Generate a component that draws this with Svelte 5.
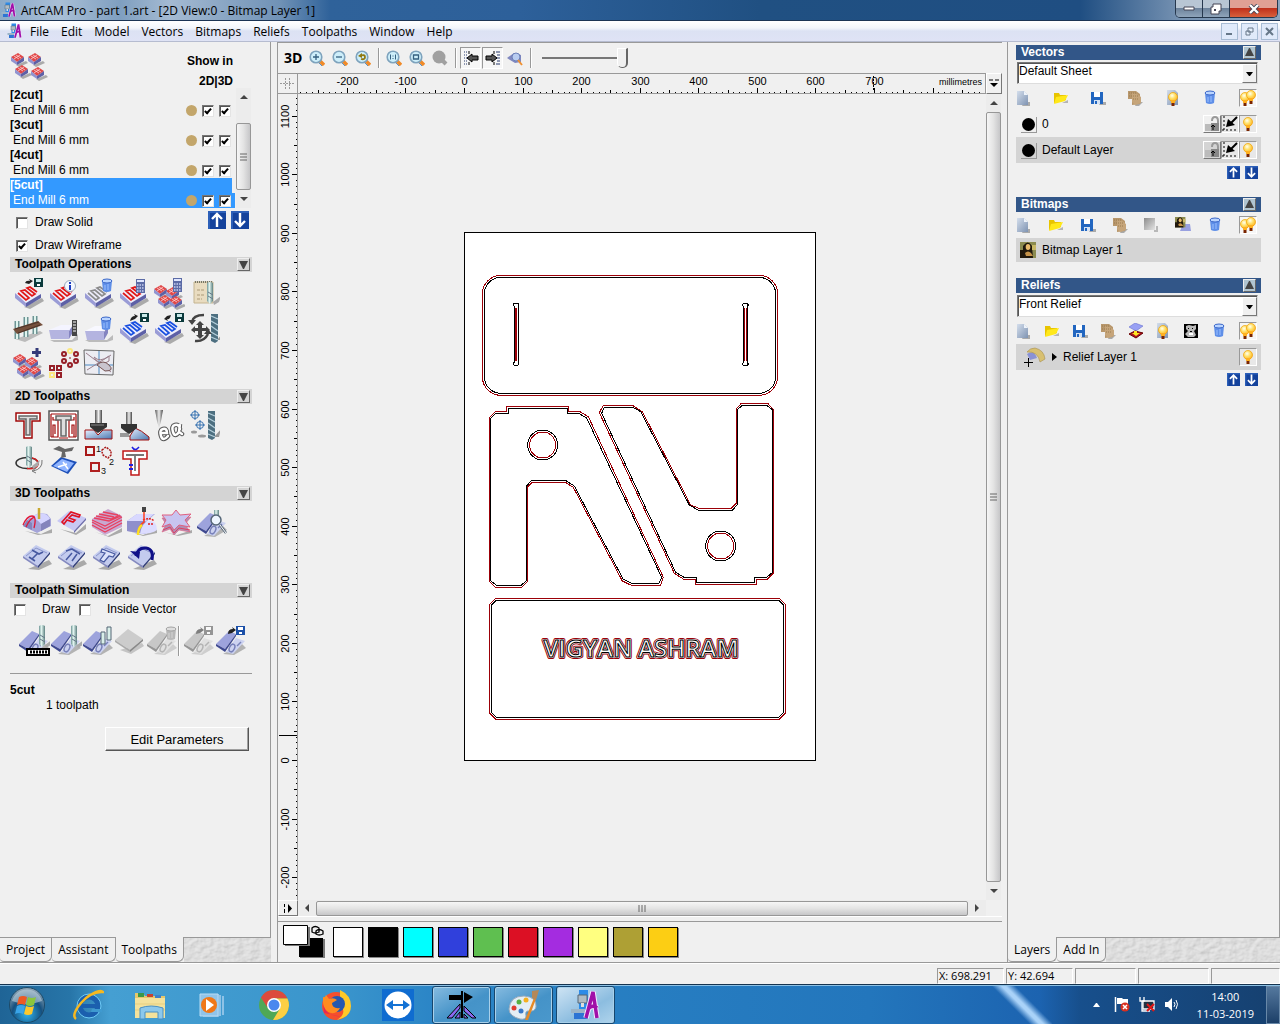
<script>
  const menus = ['File', 'Edit', 'Model', 'Vectors', 'Bitmaps', 'Reliefs', 'Toolpaths', 'Window', 'Help']

  let toolpaths = $state([
    { name: '2cut', tool: 'End Mill 6 mm', in2d: true, in3d: true },
    { name: '3cut', tool: 'End Mill 6 mm', in2d: true, in3d: true },
    { name: '4cut', tool: 'End Mill 6 mm', in2d: true, in3d: true },
    { name: '5cut', tool: 'End Mill 6 mm', in2d: true, in3d: true }
  ])
  let selected = $state('5cut')

  const sections = [
    {
      title: 'Toolpath Operations',
      icons: ['save-path', 'info-path', 'delete-path', 'calc-path', 'calc-all', 'notes', 'clamps', 'material', 'delete-material', 'export-path', 'import-path', 'transform', 'merge', 'array', 'panel']
    },
    {
      title: '2D Toolpaths',
      icons: ['profile', 'area', 'vcarve', 'bevel', 'engrave', 'drill', 'inlay', 'texture', 'order', 'bridges']
    },
    {
      title: '3D Toolpaths',
      indent: true,
      icons: ['machine', 'feature', 'zlevel', 'laser', 'cutout', 'inspect', 'plate-a', 'plate-b', 'plate-c', 'plate-undo']
    }
  ]

  const layerTools = {
    vectors: ['new', 'open', 'save', 'merge-l', 'bulb-page', 'bin', 'bulbs'],
    bitmaps: ['new', 'open', 'save', 'merge-l', 'fade', 'mona-relief', 'bin', 'bulbs'],
    reliefs: ['new', 'open', 'save', 'merge-l', 'stack', 'bulb-page', 'teddy', 'bin', 'bulbs']
  }

  const palette = [
    ['White', '#ffffff'], ['Black', '#000000'], ['Cyan', '#00ffff'], ['Blue', '#3040dc'], ['Green', '#5fbf50'],
    ['Red', '#dc1024'], ['Purple', '#a42ce0'], ['Yellow', '#ffff80'], ['Olive', '#aea034'], ['Amber', '#fcce14']
  ]

  const launchers = ['ie', 'explorer', 'player', 'chrome', 'firefox', 'teamviewer']
  const windows = ['vector-app', 'paint', 'artcam']

  // millimetres to pixels
  const scale = 0.5857
  const originX = 166
  const originY = 666

  function range(from, to, step) {
    const out = []
    for (let i = from; i <= to; i += step) out.push(i)
    return out
  }
  const tick = (mm) => (mm % 100 === 0 ? 6 : mm % 50 === 0 ? 4 : 2)
  const px = (mm) => Math.round(originX + mm * scale) + 0.5
  const py = (mm) => Math.round(originY - mm * scale) + 0.5
</script>

{#snippet icon(name, box = 32)}
  <svg class="icon" width={box} height={box} viewBox="0 0 {box} {box}" aria-hidden="true"><use href="#{name}" /></svg>
{/snippet}

{#snippet moveButtons(size)}
  <button class="plain" aria-label="Move up">
    <svg width={size} height={size} viewBox="0 0 18 18"><rect width="18" height="18" fill="#14429c" /><path d="M0 0h18v2H2v16H0Z" fill="#2c5fb8" /><path d="M9 16V3M4 8l5-5 5 5" fill="none" stroke="#fff" stroke-width="2.4" /></svg>
  </button>
  <button class="plain" aria-label="Move down">
    <svg width={size} height={size} viewBox="0 0 18 18"><rect width="18" height="18" fill="#14429c" /><path d="M0 0h18v2H2v16H0Z" fill="#2c5fb8" /><path d="M9 2v13M4 10l5 5 5-5" fill="none" stroke="#fff" stroke-width="2.4" /></svg>
  </button>
{/snippet}

{#snippet grain()}
  <svg class="grain" aria-hidden="true"><rect width="100%" height="100%" filter="url(#grain-filter)" /></svg>
{/snippet}

{#snippet sectionHead(title)}
  <header class="section-head">
    <h2>{title}</h2>
    <button class="fold" aria-label="Collapse {title}"><svg width="9" height="9" viewBox="0 0 9 9"><path d="M0 1h9L5 9H4Z" fill="#444" /></svg></button>
  </header>
{/snippet}

{#snippet layerHead(title)}
  <header class="layer-head">
    <h2>{title}</h2>
    <button class="fold light" aria-label="Collapse {title}"><svg width="9" height="9" viewBox="0 0 9 9"><path d="M0 8h9L5 0H4Z" fill="#444" /></svg></button>
  </header>
{/snippet}

{#snippet layerBar(names)}
  <div class="layer-tools">
    {#each names as name}
      <button class={['plain', name === 'bulbs' && 'sunken']} aria-label={name}>{@render icon(name, 16)}</button>
    {/each}
  </div>
{/snippet}

{#snippet sheet(id, label, value)}
  <div class="sheet">
    <select {id} aria-label={label}><option>{value}</option></select>
    <span class="drop"><svg width="7" height="4" viewBox="0 0 7 4"><path d="M0 0h7L4 4H3Z" /></svg></span>
  </div>
{/snippet}

<svg class="defs" width="0" height="0" aria-hidden="true">
  <defs>
    <filter id="grain-filter" x="0" y="0" width="100%" height="100%">
      <feTurbulence type="fractalNoise" baseFrequency="0.14 0.2" numOctaves="3" seed="4" />
      <feDiffuseLighting lighting-color="#e8e8e8" surfaceScale="1"><feDistantLight azimuth="225" elevation="64" /></feDiffuseLighting>
    </filter>
    <linearGradient id="g-steel"><stop offset="0" stop-color="#555" /><stop offset=".5" stop-color="#eee" /><stop offset="1" stop-color="#444" /></linearGradient>
    <linearGradient id="g-mill"><stop offset="0" stop-color="#6d9494" /><stop offset=".4" stop-color="#e3f6f1" /><stop offset="1" stop-color="#5d8080" /></linearGradient>
    <radialGradient id="g-bulb" cx=".4" cy=".35" r=".75"><stop offset="0" stop-color="#fffff0" /><stop offset=".45" stop-color="#ffe068" /><stop offset="1" stop-color="#ffa818" /></radialGradient>
    <linearGradient id="g-page" x1="0" y1="0" x2="1" y2="1"><stop offset="0" stop-color="#d4deec" /><stop offset="1" stop-color="#7e93b2" /></linearGradient>
    <linearGradient id="g-side" x1="0" y1="0" x2="1" y2="1"><stop offset="0" stop-color="#e8f0ff" /><stop offset="1" stop-color="#4a78b0" /></linearGradient>
    <linearGradient id="g-fade" x1="0" y1="0" x2="1" y2="1"><stop offset="0" stop-color="#8c8c8c" /><stop offset="1" stop-color="#e4e4e4" /></linearGradient>
    <radialGradient id="g-orb" cx=".5" cy=".75" r=".7"><stop offset="0" stop-color="#2fb4f0" /><stop offset=".6" stop-color="#15507f" /><stop offset="1" stop-color="#8aa2b4" /></radialGradient>

    <!-- shared parts -->
    <g id="p-body">
      <path d="M11 29 29 20l2 3-14 8Z" fill="#aaa" />
      <path d="M2 15 17 8l11 8-15 9Z" fill="#eeeefb" />
      <path d="M2 15v5l11 9v-4Z" fill="#9a9cd6" />
      <path d="M13 25v4l15-9v-4Z" fill="#5d60a6" />
    </g>
    <path id="p-zig" d="M5 15l8 7 3-2-8-7 4-1 7 6 3-2-8-6 3-1 7 5" fill="none" stroke="currentColor" stroke-width="1.7" />
    <g id="p-chip">
      <path d="M5 13 15 9l2 2-9 4Z" fill="#aaa" />
      <path d="M0 5 7 1l6 4-7 5Z" fill="#e04848" />
      <path d="M3 4l5 3M5 3l5 3M3 7l6-4" stroke="#ffd0d0" stroke-width=".8" />
      <path d="M0 5v4l6 4V10Z" fill="#9194d0" />
      <path d="M6 10v3l7-4V5Z" fill="#5d60a6" />
    </g>
    <g id="p-disk"><path d="M0 0h9v9H0Z" fill="#0b3a3c" /><path d="M2 1h5v3H2Z" fill="#c8e8e8" /><path d="M3 6h3v2H3Z" fill="#fff" /></g>
    <g id="p-bin"><path d="M0 2h10l-1 10q-4 2-8 0Z" fill="#5f8fe8" /><ellipse cx="5" cy="2" rx="5" ry="2" fill="#b9d4ff" stroke="#3a66c8" /><path d="M3 6v5M6 5v6" stroke="#9cc0ff" /></g>
    <g id="p-mill"><path d="M6 20l8-6-2 6-5 3Z" fill="#aaa" /><path d="M0 1q3-2 6 0v18l-3 3-3-3Z" fill="url(#g-mill)" /><path d="M1 10l5 3M1 14l5 3" stroke="#678" /></g>
    <g id="p-cutter"><path d="M6 26l7-8-2 8Z" fill="#999" /><path d="M0 0h7v27l-3 2-4-2Z" fill="#4d6f80" /><path d="M0 2l7 3M0 7l7 4M0 12l7 5M0 18l7 4M0 23l7 3" stroke="#b6d0dc" stroke-width="1.3" /></g>
    <g id="p-calc"><path d="M0 0h9v14H0Z" fill="#5b6ba6" /><path d="M1 2h7" stroke="#dfe6ff" stroke-width="2" /><path d="M1 6h7M1 9h7M1 12h7" stroke="#c8d0f0" stroke-width="1.5" stroke-dasharray="1.5 1" /></g>
    <g id="p-plate">
      <path d="M7 27 28 18l3 4-13 6Z" fill="#a9a9a9" />
      <path d="M2 14 15 3l14 7-12 14Z" fill="#c3cbee" />
      <path d="M2 14v2l15 10v-2Z" fill="#8389c0" />
      <path d="M17 24v2l12-14v-2Z" fill="#2c3a78" />
      <path d="M5 14 15 6l11 5" fill="none" stroke="#8c97cc" />
    </g>
    <g id="p-half">
      <path d="M8 29 27 19l4 4-12 7Z" fill="#b3b3b3" />
      <path d="M1 19 14 6l7 3-11 15Z" fill="#9da3dc" />
      <path d="M1 19v2l9 6v-3Z" fill="#3f4990" />
      <path d="M10 24 21 9v2L10 27Z" fill="#3f4990" />
      <path d="M11 27 21 13l9 3-12 13Z" fill="#ccd2f0" />
      <ellipse cx="17" cy="23" rx="2.5" ry="4" fill="none" stroke="#7982ba" stroke-width="1.5" transform="rotate(25 17 23)" />
      <path d="M22 21l4-4" stroke="#7982ba" stroke-width="1.5" />
    </g>
    <g id="p-bulb"><circle cx="5" cy="5" r="4.500" fill="url(#g-bulb)" stroke="#f0a000" stroke-width=".7" /><path d="M3 8h4v3H3Z" fill="#ffb020" /><path d="M3.500 11h3v3h-3Z" fill="#7a2500" /></g>
    <g id="p-lens">
      <path d="M11 11l4 4" stroke="#f08a28" stroke-width="3.500" />
      <path d="M9.500 12.500 13 16" stroke="#5a90c0" />
      <circle cx="7" cy="7" r="5.800" fill="#cdeefa" stroke="#7ea3bd" stroke-width="1.600" />
    </g>
    <g id="p-folder"><path d="M1 3h5l1 2h6v5L1 13Z" fill="#e8c400" /><path d="M3 7l12-2-3 6-11 3Z" fill="#ffe81a" /><path d="M9 13l6-3v3Z" fill="#b5b5b5" /></g>

    <!-- toolpath operations -->
    <g id="save-path"><use href="#p-body" /><use href="#p-zig" color="#e01818" /><path d="M12 5q1-3 5-2l-1-2 4 2-4 3" fill="#222" /><use href="#p-disk" x="21" y="0" /></g>
    <g id="info-path"><use href="#p-body" /><use href="#p-zig" color="#e01818" /><circle cx="22" cy="8" r="5.500" fill="#f4f8ff" stroke="#9ab" /><path d="M22 7v5M22 4v2" stroke="#1c3cc0" stroke-width="2" /></g>
    <g id="delete-path"><use href="#p-body" /><use href="#p-zig" color="#8c8c8c" /><use href="#p-bin" x="19" y="1" /></g>
    <g id="calc-path"><use href="#p-body" /><use href="#p-zig" color="#e01818" /><use href="#p-calc" x="18" y="1" /></g>
    <g id="calc-all"><use href="#p-chip" x="1" y="6" /><use href="#p-chip" x="13" y="8" /><use href="#p-chip" x="5" y="16" /><use href="#p-chip" x="16" y="17" /><use href="#p-calc" x="20" y="0" /></g>
    <g id="notes"><path d="M6 4h19v21H6Z" fill="#e9dcc0" stroke="#c4b490" /><path d="M7 4h17" stroke="#776" stroke-width="2" stroke-dasharray="1 1" /><path d="M9 12h8M9 17h7M9 21h5" stroke="#ab9a78" stroke-dasharray="3 1" /><use href="#p-mill" x="19" y="4" /></g>
    <g id="clamps"><path d="M2 26l10 3 18-9-3-2Z" fill="#bbb" /><path d="M4 8v18M13 4v20M22 3v18" stroke="#6d9494" stroke-width="5" /><path d="M4 8v18M13 4v20M22 3v18" stroke="#dff4ee" stroke-width="2" /><path d="M0 16 25 8l5 4L4 21Z" fill="#75503c" /><path d="M2 16 26 9M5 20l22-8" stroke="#4c3328" /></g>
    <g id="material"><path d="M2 27h22l6-6v6l-6 2H6Z" fill="#bbb" /><path d="M1 17 13 12h11l-3 6Z" fill="#f4f4ff" /><path d="M1 17h20v9H3Z" fill="#b4b4e0" /><path d="M21 18l4-6v7l-4 7Z" fill="#8484c0" /><path d="M24 7h5v16h-5Z" fill="#444" /><path d="M25 9h3M25 12h3M25 15h3M25 18h3" stroke="#fff" /></g>
    <g id="delete-material"><path d="M2 27h22l6-5v5l-6 2H6Z" fill="#bbb" /><path d="M2 18 12 13h12l-3 6Z" fill="#f8f8ff" /><path d="M2 18h19v9H4Z" fill="#b4b4e0" /><path d="M21 19l4-6v7l-4 7Z" fill="#8484c0" /><use href="#p-bin" x="18" y="4" /></g>
    <g id="export-path"><use href="#p-body" /><use href="#p-zig" color="#1a50e0" /><path d="M12 8q1-5 5-5l-1-2 4 2-3 3" fill="#222" /><use href="#p-disk" x="22" y="0" /></g>
    <g id="import-path"><use href="#p-body" /><use href="#p-zig" color="#1a50e0" /><path d="M18 2q-1 5-4 4l1 2-4-2 3-3" fill="#222" /><use href="#p-disk" x="22" y="0" /></g>
    <g id="transform"><use href="#p-cutter" x="23" y="1" /><path d="M16 2Q5 2 4 9M7 28q9 1 13-7" fill="none" stroke="#444" stroke-width="2.500" /><path d="M0 7h8l-4 5ZM16 21h8l-4-5Z" fill="#444" /><path d="M12 8l4 4h-2v3h4v-2l4 4-4 3v-2h-4v4h2l-4 4-4-4h2v-4H7v2l-4-3 4-4v2h3v-3H8Z" fill="#444" /></g>
    <g id="merge"><use href="#p-chip" x="0" y="5" /><use href="#p-chip" x="12" y="8" /><use href="#p-chip" x="4" y="16" /><use href="#p-chip" x="15" y="17" /><path d="M24 0v9M19 4.500h9" stroke="#343a78" stroke-width="3" /></g>
    <g id="array" fill="none" stroke="#962028" stroke-width="2"><path d="M2 18h4v4H2ZM9 18h4v4H9ZM9 25h4v4H9Z" /><path d="M2 25h4v4H2Z" stroke="#fbe880" /><circle cx="22" cy="3" r="2" stroke="#fbe880" /><circle cx="16" cy="6" r="2" /><circle cx="28" cy="6" r="2" /><circle cx="16" cy="13" r="2" /><circle cx="28" cy="13" r="2" /><circle cx="22" cy="17" r="2" /><path d="M21 10h2" stroke-width="1" /></g>
    <g id="panel"><path d="M1 2l30 1-1 24-28-1Z" fill="#ececf2" stroke="#666" /><path d="M2 17h28M16 3v23" stroke="#4a88c0" /><path d="M3 5l25 19M28 7 4 22M11 9q6 6 15-1v5q-7 5-13-1Z" fill="none" stroke="#9a7f8c" /><path d="M14 17q6-6 12 0t-4 6Z" fill="#c9c4ce" stroke="#755" /></g>

    <!-- 2d toolpaths -->
    <g id="profile" fill="none"><path d="M3 3h24v8h-8v17h-8V11H3Z" fill="#fff" stroke="#a00808" stroke-width="1.500" /><path d="M6 6h18v3h-7v16h-4V9H6Z" fill="#ddd" stroke="#666" stroke-width="1.500" /></g>
    <g id="area" fill="none"><path d="M1 1h29v29H1Z" fill="#fff" stroke="#555" stroke-width="1.500" /><path d="M3 4h25M3 27V4M28 4v23M5 7v3h5v17H5V15h2v9M26 7v3h-5v17h5V15h-2v9M3 27h4M28 27h-4M11 28h9" stroke="#a00808" stroke-width="1.200" /><path d="M8 6h15v4h-5v16h-5V10H8Z" fill="#ddd" stroke="#666" stroke-width="1.500" /></g>
    <g id="vcarve"><path d="M2 20h9l4 5 5-5h9v9H2Z" fill="url(#g-side)" stroke="#a01010" /><path d="M12 0h7v13h-7Z" fill="url(#g-steel)" /><path d="M7 13h17v4l-6 4-3 2-3-2-5-4Z" fill="#333" /><path d="M8 15h13" stroke="#888" /></g>
    <g id="bevel"><path d="M2 23h8l2 3 5-3v4H2Z" fill="#999" /><path d="M12 26l5-8q6 2 14 9v3H12Z" fill="url(#g-side)" stroke="#a01010" /><path d="M8 2h6v12H8Z" fill="url(#g-steel)" /><path d="M3 14h16v4l-5 4-3 2-3-2-5-4Z" fill="#333" /></g>
    <g id="engrave"><path d="M2 0h8l-2 11-2 7-2-7Z" fill="url(#g-steel)" /><g fill="none" stroke-linecap="round"><path d="M8 23h6q0-5-4-4t-2 7 7 0M27 19q-1-5-5-4t-2 7 6 0l1-8-1 8 3 2" stroke="#555" stroke-width="4.500" /><path d="M8 23h6q0-5-4-4t-2 7 7 0M27 19q-1-5-5-4t-2 7 6 0l1-8-1 8 3 2" stroke="#fff" stroke-width="2.500" /></g></g>
    <g id="drill"><g fill="none" stroke="#3570b0"><circle cx="7" cy="5" r="3.500" /><path d="M2 5h10M7 0v10" /><circle cx="12" cy="15" r="3.500" /><path d="M7 15h10M12 10v10" /></g><ellipse cx="6" cy="22" rx="3" ry="1.500" fill="#999" /><ellipse cx="14" cy="26" rx="4" ry="1.500" fill="#999" /><use href="#p-cutter" x="20" y="1" /></g>
    <g id="inlay" fill="none"><ellipse cx="14" cy="18" rx="11" ry="5.500" stroke="#333" stroke-width="1.500" /><path d="M14 12.500q11 0 11 6t-11 5" stroke="#d02020" stroke-width="1.500" /><path d="M29 15q1 9-9 11M23 23l-4 3 4 2" stroke="#777" /><use href="#p-mill" x="13" y="1" /></g>
    <g id="texture"><path d="M3 21 13 12l16 5-9 12Z" fill="#1c4fb8" /><path d="M5 21 14 14l12 4-7 9Z" fill="#8fb4ff" /><path d="M10 22l9-3M15 17l5 7" stroke="#fff" stroke-width="1.500" /><path d="M5 4l6-3 6 3 9-2-2 4-7 1 1 5-5 1 1-6Z" fill="#666" /></g>
    <g id="order" fill="none" stroke="#a81818" stroke-width="1.500"><path d="M3 2h8v8H3Z" stroke-width="2" /><path d="M8 18h8v8H8Z" stroke="#b02020" stroke-width="2" /><path d="M19 5l4-3 5 4v4l-3 3-5-3-1-3Z" stroke-dasharray="2 1" /><g fill="#111" stroke="none" font-family="Liberation Sans, sans-serif" font-size="9"><text x="13" y="7">1</text><text x="26" y="20">2</text><text x="18" y="29">3</text></g></g>
    <g id="bridges" fill="none"><path d="M5 6h24v8h-8v16h-8V14H5Z" fill="#fff" stroke="#c01818" stroke-width="1.500" /><path d="M8 10h18M17 10v16" stroke="#777" stroke-width="1.800" /><path d="M14 2q3 5 7 0" stroke="#2020e0" stroke-width="1.500" /><path d="M11 20h4M11 24h4" stroke="#2020e0" stroke-width="2" /></g>

    <!-- 3d toolpaths -->
    <g id="machine"><path d="M4 24l16 3 11-5v4l-14 2Z" fill="#aaa" /><path d="M2 19 8 11l10-5 8 1 4 5v7l-14 7Z" fill="#a4a4d8" /><path d="M8 11 18 6q9 0 11 6l-9 5q-4-6-12-6Z" fill="#d4d4ff" /><path d="M2 19l4-6 5 3v7ZM20 17l9-5v7l-9 5Z" fill="#8484bc" /><path d="M2 18q4-9 9-9t2 12M5 20q4-9 9-10" fill="none" stroke="#e01838" stroke-width="1.300" /><path d="M18 1v11" stroke="#c8a830" stroke-width="2.500" /></g>
    <g id="feature"><path d="M4 22l16 4 10-9v5L20 28Z" fill="#aaa" /><path d="M1 14 13 4l17 7-12 13Z" fill="#c8c8f4" /><path d="M18 24v2l12-13v-2Z" fill="#6c6cac" /><path d="M6 15 15 5l9 3-1 2-7-2-3 3 6 2-2 2-6-2-3 4Z" fill="none" stroke="#e01020" stroke-width="1.600" /></g>
    <g id="zlevel"><path d="M4 25l13 4 14-8v4L18 30Z" fill="#aaa" /><path d="M1 12 17 2l14 7v11L14 28 1 20Z" fill="#c8a8d0" /><path d="M3 11l15 3 12-5M5 9l15 3 9-4M8 7l15 3M12 5l15 3M1 15l13 7 17-9M1 18l13 7 17-9M1 13l13 6 17-9" fill="none" stroke="#e84060" stroke-width="1.300" /></g>
    <g id="laser"><path d="M3 24l14 4 14-6v4l-14 3Z" fill="#aaa" /><path d="M1 14 11 7h18l-9 8v12L1 24Z" fill="#a8a8dc" /><path d="M1 14h18v13L1 24Z" fill="#8f8fcc" /><path d="M1 14 11 7h17l-8 7Z" fill="#d8d8ff" /><path d="M14 27q2-13 11-13 6 1 6 9-5 4-17 4Z" fill="#dcdcff" /><path d="M17 13q7-3 11 1M22 17h6" stroke="#e02020" fill="none" stroke-dasharray="2 1" stroke-width="1.500" /><path d="M16 0h4v5h-4Z" fill="#444" /><path d="M18 5v10q-5 3-6 12" fill="none" stroke="#ff4020" stroke-width="1.500" /><path d="M16 18q-4 3-4 10" fill="none" stroke="#ffe020" stroke-width="2.500" /></g>
    <g id="cutout"><path d="M3 25l13 3 15-5v3l-14 3Z" fill="#aaa" /><path d="M1 8h10l4-5 4 5 11-1-6 7 5 8-11-2-5 5-4-6-8 3 4-8Z" fill="#b08cb4" stroke="#e06080" stroke-width=".6" transform="translate(0 3)" /><path d="M1 8h10l4-5 4 5 11-1-6 6 5 7-11-2-5 5-4-6-8 3 4-7Z" fill="#c8c4f0" stroke="#e06080" /><path d="M2 23l7-3 4 6 5-5 11 2" fill="none" stroke="#e04060" /></g>
    <g id="inspect"><use href="#p-half" /><path d="M18 3h5v12h-5Z" fill="url(#g-mill)" /><circle cx="20" cy="13" r="5" fill="#eef6ff" stroke="#567" stroke-width="1.500" /><path d="M24 18l6 8" stroke="#567" stroke-width="2.500" /><path d="M24 18l6 8" stroke="#fff" /></g>
    <g id="plate-a"><use href="#p-plate" /><path d="M11 8l7 4 4-2M17 11l-6 6M8 15l6 4" fill="none" stroke="#4658a0" stroke-width="1.600" /></g>
    <g id="plate-b"><use href="#p-plate" /><path d="M10 9l6-2 8 5M16 11l-6 7M16 19l5-7" fill="none" stroke="#4658a0" stroke-width="1.500" /></g>
    <g id="plate-c"><use href="#p-plate" /><path d="M11 7l13 5-2 3-4-1-5 6-4-2 5-7-4-1Z" fill="#dce2fa" stroke="#4658a0" stroke-width="1.200" /></g>
    <g id="plate-undo"><use href="#p-plate" /><path d="M10 14Q12 5 20 6t6 12" fill="none" stroke="#101088" stroke-width="3" /><path d="M4 9l9 8 1-7Z" fill="#101088" /></g>

    <!-- simulation -->
    <g id="sim-slow"><use href="#p-half" /><use href="#p-mill" x="21" y="0" /><path d="M9 24h22v6H9Z" fill="#fff" stroke="#000" stroke-width="2" /><path d="M12 27h17" stroke="#000" stroke-width="3" stroke-dasharray="2 1" /></g>
    <g id="sim-fast"><use href="#p-half" /><use href="#p-mill" x="21" y="0" /></g>
    <g id="sim-all"><use href="#p-half" /><path d="M19 7h4v12h-4ZM25 2h4v13h-4Z" fill="#d9efe9" stroke="#567" /></g>
    <g id="sim-reset"><path d="M6 25 28 18l2 3-13 8Z" fill="#c4c4c4" /><path d="M1 15 14 4l15 10-13 11Z" fill="#ccc" /><path d="M1 15v2l15 10v-2Z" fill="#aaa" /><path d="M16 25v2l13-11v-2Z" fill="#888" /></g>
    <g id="sim-save"><use href="#p-half" /><path d="M13 9q0-5 5-5l-1-2 4 3-4 3" fill="#222" /><path d="M21 1h9v9h-9Z" fill="#1c50a8" /><path d="M23 2h5v3h-5ZM24 7h3v2h-3Z" fill="#fff" /></g>
    <g id="sim-delete"><use href="#p-half" /><use href="#p-bin" x="20" y="2" /></g>

    <!-- layer tools, 16 px -->
    <g id="new"><path d="M8 12h6v4H6Z" fill="#aaa" /><path d="M1 1h7l4 4v10H1Z" fill="url(#g-page)" /><path d="M8 1v4h4Z" fill="#eef3fa" /></g>
    <g id="open"><use href="#p-folder" /></g>
    <g id="save"><path d="M11 12h5v3H9Z" fill="#aaa" /><path d="M1 2h12v12H1Z" fill="#2266c0" /><path d="M4 2h6v5H4Z" fill="#fff" /><path d="M4 10h6v4H4Z" fill="#d4e2f4" /><path d="M5 11h2v3H5Z" fill="#2266c0" /></g>
    <g id="merge-l"><path d="M10 12h6l-4 4H8Z" fill="#aaa" /><path d="M1 1h8l4 3v10l-8 1V9H1Z" fill="#b8976c" /><path d="M5 3l5 1 4 3v6l-6 2-3-3Z" fill="#c6a57a" /><path d="M2 3h7M2 6h9M6 9h6" stroke="#9a7c50" stroke-dasharray="1 1" /></g>
    <g id="bulb-page"><path d="M2 0h8l3 3v12H2Z" fill="url(#g-page)" /><use href="#p-bulb" x="3" y="2" /></g>
    <g id="bin"><use href="#p-bin" x="3" y="1" /></g>
    <g id="bulbs"><use href="#p-bulb" x="0" y="2" /><use href="#p-bulb" x="6" y="0" /></g>
    <g id="bulb"><use href="#p-bulb" x="3" y="1" /></g>
    <g id="fade"><path d="M1 1h11v12H1Z" fill="url(#g-fade)" /><path d="M13 9h2v6h-4v-2h2Z" fill="#b8b8b8" /></g>
    <g id="mona"><path d="M0 0h16v16H0Z" fill="#8b8b50" /><path d="M0 8h5v8H0ZM3 4q5-7 9 0l1 12H3Z" fill="#20180c" /><ellipse cx="8" cy="5" rx="2.300" ry="3" fill="#eabb6c" /><path d="M5 11q3-3 6 0l2 3H6Z" fill="#c59248" /><path d="M12 3h4v5h-4Z" fill="#c8b868" /></g>
    <g id="mona-relief"><path d="M8 7h7l1 7H5Z" fill="#98a0e0" /><use href="#mona" transform="scale(.65)" /></g>
    <g id="stack"><path d="M1 4 7 0l8 3-7 5Z" fill="#98a0f4" stroke="#6870d0" stroke-width=".6" /><path d="M1 11l6-3 8 2-7 5Z" fill="#b01020" stroke="#600" /><path d="M6 8h3v2h3l-4 3-4-3h2Z" fill="#ffe820" /></g>
    <g id="teddy"><path d="M1 1h14v14H1Z" /><path d="M3 3l3-1 4 1 3-1v4l-2 2 2 4-2 2H5l-3-3 3-3-2-2Z" fill="#bbb" /><path d="M5 5h1v1H5ZM9 5h1v1H9ZM7 8h2v1H7Z" /><path d="M6 10h4v2H6Z" fill="#fff" /></g>
    <g id="lock"><path d="M8 5q0-4 3-4t3 4v3" fill="none" stroke="#999" stroke-width="2" /><path d="M1 8h13v7H1Z" fill="#bbb" /><path d="M7 7h8v8H7Z" fill="#888" /><path d="M9 14V9M7 11l2-2 2 2" stroke="#000" fill="none" /></g>
    <g id="snap"><path d="M2 0v16M0 14h16" stroke="#000" stroke-dasharray="2 2" /><path d="M15 1 9 7" stroke="#000" stroke-width="2" /><path d="M6 3l7 6-9 2Z" /></g>

    <!-- view tools -->
    <g id="zoom-in"><use href="#p-lens" /><path d="M7 4v6M4 7h6" stroke="#356080" stroke-width="1.300" /></g>
    <g id="zoom-out"><use href="#p-lens" /><path d="M4 7h6" stroke="#356080" stroke-width="1.300" /></g>
    <g id="zoom-prev"><use href="#p-lens" /><path d="M6 9q4 1 4-2T5 6" fill="none" stroke="#907810" stroke-width="1.800" /><path d="M3 6l4-3v5Z" fill="#907810" /></g>
    <g id="zoom-one"><use href="#p-lens" /><path d="M4.500 4.500v5M9.500 4.500v5M7 5.500v1M7 8v1" stroke="#356080" /></g>
    <g id="zoom-fit"><use href="#p-lens" /><path d="M4.500 5h5v4h-5Z" fill="none" stroke="#356080" stroke-width="1.300" /></g>
    <g id="zoom-sel"><circle cx="7" cy="7" r="6.500" fill="#a0a0a0" /><path d="M10 10l4 4" stroke="#a0a0a0" stroke-width="4" /></g>
    <g id="dock-left"><path d="M1 2h4M1 5h3M1 8h4M1 11h3M1 14h4" stroke="#26386c" stroke-dasharray="1 1" /><path d="M6 1v3M6 12v3" stroke="#000" /><path d="M4 8l5-4v2h6v4H9v2Z" fill="#555" stroke="#000" /></g>
    <g id="dock-right"><path d="M11 2h4M12 5h3M11 8h4M12 11h3M11 14h4" stroke="#26386c" /><path d="M9 1v3M9 12v3" stroke="#000" /><path d="M12 8 7 4v2H1v4h6v2Z" fill="#555" stroke="#000" /></g>
    <g id="view-relief"><path d="M0 8 7 3l7 2v7l-6 1Z" fill="#8088c0" /><circle cx="9" cy="7" r="4" fill="#b8ccf0" stroke="#6c80b8" /><path d="M11 10l4 5" stroke="#f09030" stroke-width="2" /></g>

    <!-- desktop -->
    <g id="artcam"><path d="M9 1h9v20H9Z" fill="#2d8be8" /><path d="M8 6h9v8H8Z" fill="#b0bcc4" stroke="#567" /><path d="M11 14h3v4h-3Z" fill="#ddd" /><path d="M1 20h14v4H1Z" fill="#9bb4c8" /><path d="M4 24h14v6H4Z" fill="#2d74d4" /><path d="M16 29 23 3l4 26M18 20q5-5 9-1" fill="none" stroke="#f4e8ff" stroke-width="5.500" /><path d="M16 29 23 3l4 26M18 20q5-5 9-1" fill="none" stroke="#a010a8" stroke-width="3.500" /></g>
    <g id="ie"><circle cx="17" cy="17" r="9" fill="none" stroke="#1b5fae" stroke-width="5" /><circle cx="17" cy="17" r="12" fill="none" stroke="#6cc8f4" /><path d="M10 17h16" stroke="#1b5fae" stroke-width="4" /><path d="M20 20h10v3H19Z" fill="#3f9ad0" /><path d="M4 30Q-1 26 9 14T31 3q-2-3-11 2" fill="none" stroke="#f6b820" stroke-width="2.500" /></g>
    <g id="explorer"><path d="M1 4h8l2 3h20v22H1Z" fill="#e5c76c" /><path d="M4 4h6v4H4Z" fill="#3a9848" /><path d="M13 5h6v3h-6Z" fill="#c64232" /><path d="M21 6h6v3h-6Z" fill="#3f80c8" /><path d="M1 9h30v20H1Z" fill="#f4e29c" /><path d="M1 15h30M1 21h30" stroke="#e7cf80" /><path d="M6 19q11-4 23 0v11h-5v-7H11v7H6Z" fill="#8cc8ec" stroke="#4890c4" /></g>
    <g id="player"><path d="M7 5h16v23H7Z" fill="#82b8e0" /><path d="M24 6v21M27 7v19" stroke="#a8d0ee" fill="none" stroke-width="1.500" /><path d="M4 5h18v22H4Z" fill="#90c4ea" stroke="#b8dcf4" /><circle cx="13" cy="16" r="8" fill="#f07818" /><path d="M10 10v12l8-6Z" fill="#fff" /></g>
    <g id="chrome"><circle cx="16" cy="16" r="15" fill="#4fa856" /><path d="M3 8.500a15 15 0 0 1 26.500 1H16a7 7 0 0 0-6.500 9Z" fill="#dc4a3c" /><path d="M29.500 9.500A15 15 0 0 1 15 31l7-11.500q2-6-5-10Z" fill="#fccf44" /><circle cx="16" cy="16" r="7" fill="#fff" /><circle cx="16" cy="16" r="5.500" fill="#4a88ee" /></g>
    <g id="firefox"><circle cx="16" cy="17" r="14" fill="#f5502c" /><path d="M20 1q11 5 11 16T17 31Q28 24 20 15Z" fill="#ffc928" /><circle cx="17" cy="15" r="8" fill="#2458b0" /><path d="M3 8q2 1 3-2l3 4q5-2 8 1l-5 3q0 6 8 5-3 6-9 5T3 15Z" fill="#ff8c20" /><path d="M3 13q1 12 13 14T4 24Z" fill="#e42858" /></g>
    <g id="teamviewer"><path d="M0 0h32v32H0Z" fill="#0f6cd0" /><circle cx="16" cy="16" r="13.500" fill="#fff" /><path d="M4 16l7-5v4h10v-4l7 5-7 5v-4H11v4Z" fill="#1472d4" /></g>
    <g id="vector-app"><path d="M3 6h12v5H3ZM18 3l9 5-9 6Z" /><path d="M16 2v27" stroke="#000" stroke-width="2" /><path d="M1 29 14 15v4L6 29ZM9 29l5-6v6ZM18 17l12 12h-4l-8-7ZM18 25l4 4h-4Z" fill="#8c68f0" stroke="#000" /></g>
    <g id="paint"><path d="M1 20Q2 7 16 7q13 1 12 11-1 5-8 4-3 0-2 5 0 4-6 3Q1 27 1 20Z" fill="#e3eef4" stroke="#9ab" /><circle cx="6" cy="19" r="2.500" fill="#e03c30" /><circle cx="11" cy="13" r="2.500" fill="#58b040" /><circle cx="18" cy="11" r="2.500" fill="#f4b020" /><circle cx="13" cy="22" r="2.500" fill="#3878c8" /><path d="M17 31l9-22 2 1-8 21Z" fill="#e58a28" /><path d="M24 2l7-1-3 10-4-2Z" fill="#b48858" /></g>
  </defs>
</svg>

<div class="app">
  <header class="titlebar">
    {@render icon('artcam')}
    <h1>ArtCAM Pro - part 1.art - [2D View:0 - Bitmap Layer 1]</h1>
    <div class="caption">
      <button aria-label="Minimize"><svg width="12" height="6" viewBox="0 0 12 6"><path d="M1 1h10v3H1Z" fill="#fff" stroke="#445" /></svg></button>
      <button aria-label="Restore"><svg width="12" height="12" viewBox="0 0 12 12"><path d="M3 1h8v7H9v3H1V4h2Z" fill="#fff" stroke="#445" /><path d="M4 6h2v2H4Z" fill="#445" /></svg></button>
      <button class="close" aria-label="Close"><svg width="12" height="10" viewBox="0 0 12 10"><path d="M2 1l8 8M10 1 2 9" stroke="#445" stroke-width="4" /><path d="M2 1l8 8M10 1 2 9" stroke="#fff" stroke-width="2.400" /></svg></button>
    </div>
  </header>

  <nav class="menubar">
    {@render icon('artcam')}
    {#each menus as menu}
      <button class="plain">{menu}</button>
    {/each}
    <div class="mdi">
      <button aria-label="Minimize view"><svg width="9" height="9"><path d="M1 7h6" stroke="#678" stroke-width="2" /></svg></button>
      <button aria-label="Restore view"><svg width="9" height="9"><path d="M3 1h5v4H3ZM1 4h4v4H1Z" fill="#e4eefa" stroke="#678" /></svg></button>
      <button aria-label="Close view"><svg width="9" height="9"><path d="M1 1l7 7M8 1 1 8" stroke="#678" stroke-width="2" /></svg></button>
    </div>
  </nav>

  <main>
    <aside class="left">
      <div class="panel">
        <div class="list-head">
          <svg width="40" height="32" viewBox="0 0 40 32" aria-hidden="true"><use href="#p-chip" x="1" y="0" /><use href="#p-chip" x="18" y="0" /><use href="#p-chip" x="5" y="12" /><use href="#p-chip" x="21" y="14" /></svg>
          <p>Show in<br />2D|3D</p>
        </div>

        <div class="list">
          <div class="rows">
            {#each toolpaths as path}
              <div class={['path', path.name === selected && 'selected']}>
                <button class="plain name" onclick={() => (selected = path.name)}>[{path.name}]</button>
                <div class="tool">
                  <span>{path.tool}</span>
                  <i class="dot"></i>
                  <input type="checkbox" aria-label="Show {path.name} in 2D" bind:checked={path.in2d} />
                  <input type="checkbox" aria-label="Show {path.name} in 3D" bind:checked={path.in3d} />
                </div>
              </div>
            {/each}
          </div>
          <div class="vbar">
            <button class="plain" aria-label="Scroll up"><svg width="8" height="4"><path d="M0 4h8L4 0Z" fill="#444" /></svg></button>
            <div class="thumb"><svg width="7" height="8"><path d="M0 1h7M0 4h7M0 7h7" stroke="#666" /></svg></div>
            <button class="plain" aria-label="Scroll down"><svg width="8" height="4"><path d="M0 0h8L4 4Z" fill="#444" /></svg></button>
          </div>
        </div>

        <div class="options">
          <div>
            <label><input type="checkbox" />Draw Solid</label>
            <label><input type="checkbox" checked />Draw Wireframe</label>
          </div>
          <div class="move">{@render moveButtons(18)}</div>
        </div>

        {#each sections as section}
          {@render sectionHead(section.title)}
          <div class={['icons', section.indent && 'indent']}>
            {#each section.icons as name}
              <button class="plain" aria-label={name}>{@render icon(name)}</button>
            {/each}
          </div>
        {/each}

        {@render sectionHead('Toolpath Simulation')}
        <div class="sim-options">
          <label><input type="checkbox" />Draw</label>
          <label><input type="checkbox" />Inside Vector</label>
        </div>
        <div class="sim-icons">
          <button class="plain" aria-label="Simulate slowly">{@render icon('sim-slow')}</button>
          <button class="plain" aria-label="Simulate">{@render icon('sim-fast')}</button>
          <button class="plain" aria-label="Simulate all">{@render icon('sim-all')}</button>
          <button class="plain" aria-label="Reset simulation">{@render icon('sim-reset')}</button>
          <button class="plain off" aria-label="Delete simulation" disabled>{@render icon('sim-delete')}</button>
          <span class="rule"></span>
          <button class="plain off" aria-label="Load simulation" disabled>{@render icon('sim-save')}</button>
          <button class="plain" aria-label="Save simulation">{@render icon('sim-save')}</button>
        </div>
        <hr />
        <div class="summary">
          <b>{selected}</b>
          <span>1 toolpath</span>
        </div>
        <button class="edit">Edit Parameters</button>
      </div>
      <div class="tabs">
        <button>Project</button>
        <button>Assistant</button>
        <button class="active">Toolpaths</button>
        {@render grain()}
      </div>
    </aside>

    <section class="center">
      <div class="viewbar">
        <button class="plain three-d">3D</button>
        <button class="plain" aria-label="Zoom in">{@render icon('zoom-in', 16)}</button>
        <button class="plain" aria-label="Zoom out">{@render icon('zoom-out', 16)}</button>
        <button class="plain" aria-label="Zoom previous">{@render icon('zoom-prev', 16)}</button>
        <span class="rule"></span>
        <button class="plain" aria-label="Actual size">{@render icon('zoom-one', 16)}</button>
        <button class="plain" aria-label="Fit">{@render icon('zoom-fit', 16)}</button>
        <button class="plain" aria-label="Zoom to selection">{@render icon('zoom-sel', 16)}</button>
        <span class="rule"></span>
        <button class="plain sunken" aria-label="Toggle left panel">{@render icon('dock-left', 16)}</button>
        <button class="plain sunken" aria-label="Toggle right panel">{@render icon('dock-right', 16)}</button>
        <button class="plain" aria-label="Preview relief">{@render icon('view-relief', 16)}</button>
        <span class="rule"></span>
        <input type="range" min="0" max="100" value="100" aria-label="Contrast" />
      </div>

      <div class="view">
        <div class="corner"><svg width="15" height="11"><path d="M0 5.500h15M5.500 0v11M9.500 0v11" stroke="#999" stroke-dasharray="2 1" /></svg></div>
        <svg class="ruler top">
          {#each range(-280, 880, 10) as mm}
            <path d="M{px(mm)} 20v-{tick(mm)}" stroke="#000" />
          {/each}
          {#each range(-200, 700, 100) as mm}
            <text x={px(mm)} y="11" text-anchor="middle">{mm}</text>
          {/each}
          <path d="M575.500 2v14" stroke="#000" stroke-dasharray="2 1" />
          <text class="unit" x="100%" y="11" dx="-3" text-anchor="end">millimetres</text>
        </svg>
        <button class="raised" aria-label="Units"><svg width="10" height="9"><path d="M0 1h4M6 1h4" stroke="#000" /><path d="M1 4h8L5 8Z" /></svg></button>

        <svg class="ruler side">
          {#each range(-230, 1130, 10) as mm}
            <path d="M20 {py(mm)}h-{tick(mm)}" stroke="#000" />
          {/each}
          {#each range(-200, 1100, 100) as mm}
            <text transform="translate(11 {py(mm)}) rotate(-90)" text-anchor="middle">{mm}</text>
          {/each}
          <path d="M1 641.500h19" stroke="#000" />
        </svg>
        <svg class="canvas" role="img" aria-label="Part layout">
          <rect x="166.500" y="138.500" width="351" height="528" fill="#fff" stroke="#000" />
          <svg x="166" y="138" width="351" height="528" viewBox="-18 -474 1053 1584">
            <g class="cut">
              <rect x="37" y="-344" width="886" height="360" rx="56" />
              <path d="M58 83 76 65H110V49H295V65H330L355 80 580 562 572 586H484L457 573 310 292 286 277H187L172 292V575L155 592H77L58 575Z" />
              <path d="M388 68 400 46H487L517 65 662 345 687 355H784L798 340V57L814 40H893L910 58V550L893 567H860V582H675V567H640L613 550Z" />
              <path d="M59 643 77 625H928L946 643V970L928 988H77L59 970Z" />
              <circle cx="218" cy="165" r="39" />
              <circle cx="752" cy="468" r="39" />
            </g>
            <g class="outline">
              <rect x="43" y="-338" width="874" height="348" rx="50" />
              <path d="M62 85 78 70H116V55H292V70H326L350 84 575 562 567 580H484L459 567 313 288 286 271H184L170 288V572L153 586H79L62 572Z" />
              <path d="M395 70 403 51H487L512 65 658 345 686 361H787L801 345V60L817 46H890L908 60V547L890 562H854V577H679V562H642L617 547Z" />
              <path d="M65 645 79 631H926L941 645V968L926 982H79L65 968Z" />
              <circle cx="218" cy="165" r="45" />
              <circle cx="752" cy="468" r="45" />
              <path d="M132-251l-3-4 3-4h12l3 4-3 4V-82l3 4-3 4H132l-3-4 3-4ZM820-251l-3-4 3-4h12l3 4-3 4V-82l3 4-3 4H820l-3-4 3-4Z" />
            </g>
            <g class="cut"><path d="M136-247V-86M140-247V-86M824-247V-86M828-247V-86" /></g>
          </svg>
          <g class="sign">
            <use href="#sign" class="halo" />
            <use href="#sign" class="gap" />
            <text id="sign" x="343" y="563" text-anchor="middle">VIGYAN ASHRAM</text>
            <use href="#sign" class="line" />
          </g>
        </svg>
        <div class="vbar">
          <button class="plain" aria-label="Scroll up"><svg width="8" height="4"><path d="M0 4h8L4 0Z" fill="#444" /></svg></button>
          <div class="thumb"><svg width="7" height="8"><path d="M0 1h7M0 4h7M0 7h7" stroke="#666" /></svg></div>
          <button class="plain" aria-label="Scroll down"><svg width="8" height="4"><path d="M0 0h8L4 4Z" fill="#444" /></svg></button>
        </div>

        <button class="raised" aria-label="Next view"><svg width="10" height="9"><path d="M1.500 0v3M1.500 5v4" stroke="#000" /><path d="M5 0l4 4.500L5 9Z" /></svg></button>
        <div class="hbar">
          <button class="plain" aria-label="Scroll left"><svg width="4" height="8"><path d="M4 0v8L0 4Z" fill="#444" /></svg></button>
          <div class="thumb"><svg width="8" height="7"><path d="M1 0v7M4 0v7M7 0v7" stroke="#666" /></svg></div>
          <button class="plain" aria-label="Scroll right"><svg width="4" height="8"><path d="M0 0v8l4-4Z" fill="#444" /></svg></button>
        </div>
      </div>

      <div class="palette">
        <svg width="42" height="34" aria-label="Primary and secondary colour">
          <path d="M17 14h25v19H17Z" fill="#777" />
          <path d="M16 13h24v19H16Z" />
          <path d="M2 2h25v19H2Z" fill="#777" />
          <path d="M.500 .500h24v19h-24Z" fill="#fff" stroke="#000" />
          <path d="M29 3q3-3 7 0v4q-4 2-7 0ZM33 6q3-3 7 0v3q-4 2-7 0Z" fill="none" stroke="#000" stroke-width="1.300" />
        </svg>
        {#each palette as [name, color]}
          <button class="swatch" aria-label={name} style="background: {color}"></button>
        {/each}
      </div>
    </section>

    <aside class="right">
      <div class="panel">
        {@render layerHead('Vectors')}
        {@render sheet('vector-sheet', 'Vector sheet', 'Default Sheet')}
        {@render layerBar(layerTools.vectors)}
        {#each ['0', 'Default Layer'] as layer, i}
          <div class={['layer', i === 1 && 'current']}>
            <button class="plain color" aria-label="Colour of {layer}"><i></i></button>
            <span>{layer}</span>
            <div class="flags">
              <button class="plain popped" aria-label="Lock {layer}">{@render icon('lock', 16)}</button>
              <button class="plain sunken" aria-label="Snap to {layer}">{@render icon('snap', 16)}</button>
              <button class="plain sunken" aria-label="Show {layer}">{@render icon('bulb', 16)}</button>
            </div>
          </div>
        {/each}
        <div class="move">{@render moveButtons(13)}</div>

        {@render layerHead('Bitmaps')}
        {@render layerBar(layerTools.bitmaps)}
        <div class="layer current short">
          {@render icon('mona', 16)}
          <span>Bitmap Layer 1</span>
        </div>

        <div class="spacer"></div>
        {@render layerHead('Reliefs')}
        {@render sheet('relief-side', 'Relief side', 'Front Relief')}
        {@render layerBar(layerTools.reliefs)}
        <div class="layer current relief-layer">
          <svg width="22" height="22" viewBox="0 0 22 22" aria-hidden="true"><path d="M3 8q7-5 10 4l-7 2Z" fill="#8a92d4" /><path d="M3 6Q6 2 11 2q9 2 10 11l-5 3Q14 5 3 6Z" fill="#d8c070" stroke="#a89050" stroke-width=".6" /><path d="M4.500 12v9M0 16.500h9" stroke="#000" /></svg>
          <svg width="5" height="8" aria-hidden="true"><path d="M0 0v8l5-4Z" /></svg>
          <span>Relief Layer 1</span>
          <div class="flags">
            <button class="plain sunken" aria-label="Show Relief Layer 1">{@render icon('bulb', 16)}</button>
          </div>
        </div>
        <div class="move">{@render moveButtons(13)}</div>
      </div>
      <div class="tabs">
        <button class="active">Layers</button>
        <button>Add In</button>
        {@render grain()}
      </div>
    </aside>
  </main>

  <footer class="status">
    <span>X: 698.291</span>
    <span>Y: 42.694</span>
    <span></span>
    <span></span>
    <span></span>
  </footer>

  <div class="taskbar">
    <button class="plain start" aria-label="Start">
      <svg width="38" height="38" viewBox="0 0 38 38">
        <circle cx="19" cy="19" r="17.500" fill="url(#g-orb)" stroke="#1c4a68" />
        <path d="M4 15a15.500 15.500 0 0 1 30 0q-15 6-30 0Z" fill="#c9d8e2" opacity=".55" />
        <path d="M11 11q4-2 8 0l-2 8q-4-2-8 0Z" fill="#ee5a24" />
        <path d="M20 11q4 2 8 0l-2 8q-4 2-8 0Z" fill="#8cc63c" />
        <path d="M9 20q4-2 8 0l-2 8q-4-2-8 0Z" fill="#3aa4e8" />
        <path d="M18 20q4 2 8 0l-2 8q-4 2-8 0Z" fill="#fcc82c" />
      </svg>
    </button>
    {#each launchers as name}
      <button class="plain launcher" aria-label={name}>{@render icon(name)}</button>
    {/each}
    {#each windows as name}
      <button class={['task', name === 'artcam' && 'front']} aria-label={name}>{@render icon(name)}</button>
    {/each}
    <div class="tray">
      <svg width="7" height="4"><path d="M0 4h7L4 0H3Z" fill="#fff" /></svg>
      <svg width="17" height="17"><path d="M1.500 1v15" stroke="#fff" stroke-width="1.500" /><path d="M3 2h5l1 1h5v6H9L8 8H3Z" fill="#fff" /><circle cx="11" cy="11" r="4.500" fill="#d83020" /><path d="M9 9l4 4M13 9l-4 4" stroke="#fff" stroke-width="1.500" /></svg>
      <svg width="17" height="17"><path d="M4 5h11v8H4Z" fill="#234" stroke="#fff" stroke-width="1.300" /><path d="M1 1v4h4V1M3 5v10h8" fill="none" stroke="#fff" stroke-width="1.300" /><path d="M8 8l7 7M15 8l-7 7" stroke="#e01818" stroke-width="2" /></svg>
      <svg width="17" height="17"><path d="M1 6h3l4-4v13l-4-4H1Z" fill="#fff" /><path d="M10 6q2 2 0 5M12 4q3 4 0 9" fill="none" stroke="#fff" /></svg>
      <time>14:00<br />11-03-2019</time>
      <button class="peek" aria-label="Show desktop"></button>
    </div>
  </div>
</div>

<style>
  :global(body) {
    background: #f0f0f0;
  }

  .app {
    display: grid;
    grid-template-rows: 21px 21px 1fr 21px 40px;
    height: 100vh;
    min-height: 960px;
    font: 12px/15px 'Liberation Sans', Arial, sans-serif;
    color: #000;
    background: #f0f0f0;
  }

  .defs {
    position: absolute;
  }

  svg {
    display: block;
    flex: none;
  }

  h1, h2, p {
    margin: 0;
  }

  button, select {
    font: inherit;
    color: inherit;
  }

  .plain {
    display: block;
    padding: 0;
    border: 0;
    background: none;
  }

  .titlebar, .menubar, .tabs, .status, .taskbar {
    font-family: 'Open Sans', 'Segoe UI', sans-serif;
  }

  /* title and menu */
  .titlebar {
    display: flex;
    align-items: center;
    padding: 0 2px 0 1px;
    background: linear-gradient(90deg, #8caac8 0, #a9bfd6 60px, #7f9fc0 120px, #a4bad2 170px, #7092b6 280px, #2f629a 330px, #2d609a 520px, #205082 760px, #1f4e82 1080px, #7692b2 1180px, #8ca4be 100%);
    border-bottom: 1px solid #1b3454;
    box-sizing: border-box;
  }

  .titlebar .icon, .menubar .icon {
    width: 16px;
    height: 16px;
  }

  .titlebar h1 {
    margin-left: 4px;
    font-size: 12px;
    font-weight: 400;
  }

  .caption {
    display: flex;
    align-self: flex-start;
    margin-left: auto;
    border: 1px solid #26384e;
    border-top: 0;
    border-radius: 0 0 5px 5px;
    overflow: hidden;
  }

  .caption button {
    display: grid;
    place-items: center;
    width: 27px;
    height: 17px;
    padding: 0;
    border: 0;
    border-right: 1px solid #26384e;
    background: linear-gradient(#b8c6d4 45%, #6d839c 50%, #8fa4ba);
  }

  .caption .close {
    width: 47px;
    border-right: 0;
    background: linear-gradient(#e0a094 45%, #c0311c 50%, #d8603c);
  }

  .menubar {
    display: flex;
    align-items: center;
    gap: 12px;
    padding: 0 2px 0 7px;
    background: linear-gradient(#fff, #f2f5fb 35%, #dce2f3 50%, #dfe3f5);
    border-bottom: 1px solid #b6bcd0;
    box-sizing: border-box;
  }

  .menubar .icon {
    margin-right: -5px;
  }

  .mdi {
    display: flex;
    gap: 3px;
    margin-left: auto;
  }

  .mdi button {
    display: grid;
    place-items: center;
    width: 17px;
    height: 17px;
    padding: 0;
    border: 1px solid #a8bcd4;
    background: #e0eafa;
  }

  main {
    display: grid;
    grid-template-columns: 271px minmax(0, 1fr) 273px;
    border-bottom: 1px solid #999;
    min-height: 0;
  }

  aside {
    display: flex;
    flex-direction: column;
    min-height: 0;
  }

  .panel {
    flex: 1;
    border-bottom: 1px solid #999;
  }

  /* left panel */
  .left .panel {
    padding: 9px 18px 0 10px;
    border-right: 1px solid #999;
    border-left: 1px solid #fff;
    margin-left: -1px;
  }

  .list-head {
    display: flex;
    justify-content: space-between;
    padding-right: 19px;
    height: 37px;
  }

  .list-head p {
    font-weight: 700;
    line-height: 20px;
    text-align: right;
  }

  .list-head svg {
    margin-top: 1px;
  }

  .list {
    display: flex;
  }

  .rows {
    width: 225px;
  }

  .path {
    height: 30px;
  }

  .path .name {
    display: block;
    width: 222px;
    height: 15px;
    text-align: left;
    font-weight: 700;
  }

  .path .tool {
    display: flex;
    align-items: center;
    gap: 5px;
    height: 15px;
    padding: 0 4px 0 3px;
  }

  .tool span {
    flex: 1;
  }

  .selected .name, .selected .tool {
    color: #fff;
    background: #3399ff;
  }

  .dot {
    width: 11px;
    height: 11px;
    border-radius: 50%;
    background: #c3a66b;
  }

  input[type='checkbox'] {
    appearance: none;
    flex: none;
    width: 12px;
    height: 12px;
    margin: 0;
    background: #fff;
    border: 1px solid;
    border-color: #777 #e4e4e4 #e4e4e4 #777;
    box-shadow: inset 1px 1px #555;
    box-sizing: border-box;
  }

  input[type='checkbox']:checked::before {
    content: '';
    display: block;
    width: 2px;
    height: 5px;
    margin: 1px 0 0 3px;
    border: solid #000;
    border-width: 0 2px 2px 0;
    transform: rotate(42deg);
  }

  .vbar {
    display: flex;
    flex-direction: column;
    align-items: center;
    width: 15px;
    background: #ececec;
  }

  .vbar button, .hbar button {
    display: grid;
    place-items: center;
    width: 18px;
    height: 18px;
  }

  .vbar .thumb, .hbar .thumb {
    display: grid;
    place-items: center;
    box-sizing: border-box;
    border: 1px solid #979797;
    border-radius: 2px;
    background: linear-gradient(90deg, #f6f6f6, #e3e3e3 50%, #c6c6c8);
  }

  .vbar .thumb {
    width: 15px;
    flex: 1;
  }

  .list .vbar {
    margin-left: 1px;
  }

  .list .thumb {
    flex: none;
    height: 67px;
    margin-top: auto;
  }

  .options {
    display: flex;
    justify-content: space-between;
    padding: 3px 3px 0 6px;
  }

  label {
    display: flex;
    align-items: center;
    gap: 7px;
    height: 23px;
  }

  .move {
    display: flex;
    align-items: flex-start;
    gap: 5px;
  }

  .section-head, .layer-head {
    display: flex;
    align-items: center;
    justify-content: space-between;
    height: 15px;
    padding: 0 2px 0 5px;
    background: #d4d4d4;
  }

  h2 {
    font-size: 12px;
  }

  .fold {
    display: grid;
    place-items: center;
    width: 13px;
    height: 13px;
    padding: 0;
    border: 1px solid;
    border-color: #eee #666 #666 #eee;
    background: #d4d4d4;
    box-sizing: border-box;
  }

  .light {
    background: #b0c4d0;
  }

  .icons {
    display: grid;
    grid-template-columns: repeat(6, 35px);
    grid-auto-rows: 35px;
    padding: 4px 0 8px 3px;
  }

  .icons.indent {
    padding-left: 11px;
  }

  .sim-options {
    display: flex;
    gap: 9px;
    padding-left: 4px;
  }

  .sim-options label {
    gap: 16px;
  }

  .sim-icons {
    display: flex;
    align-items: center;
    padding: 4px 0 16px 8px;
  }

  .off {
    filter: grayscale(1);
    opacity: 0.55;
  }

  .rule {
    width: 1px;
    height: 20px;
    background: #999;
    box-shadow: 1px 0 #fff;
  }

  .sim-icons .rule {
    height: 30px;
    margin-right: 4px;
  }

  hr {
    margin: 0 0 9px;
    border: 0;
    border-top: 1px solid #999;
  }

  .summary {
    display: grid;
  }

  .summary span {
    padding-left: 36px;
  }

  .edit {
    display: block;
    width: 144px;
    height: 24px;
    margin: 14px 3px 0 auto;
    border: 1px solid;
    border-color: #fff #555 #555 #fff;
    box-shadow: inset -1px -1px #a0a0a0;
    background: #f0f0f0;
    font-size: 13px;
  }

  .tabs {
    display: flex;
    height: 24px;
  }

  .tabs button {
    padding: 0 6px;
    border: 1px solid #999;
    border-width: 0 1px 1px 0;
    border-radius: 0 0 6px 4px;
    background: #f0f0f0;
  }

  .tabs .active {
    margin-top: -1px;
  }

  .grain {
    flex: 1;
    min-width: 0;
    height: 24px;
  }

  /* drawing view */
  .center {
    display: flex;
    flex-direction: column;
    margin: 0 5px 0 6px;
    border-top: 1px solid #999;
    border-left: 1px solid #999;
    min-height: 0;
  }

  .viewbar {
    display: flex;
    align-items: center;
    gap: 7px;
    height: 30px;
    padding-left: 6px;
  }

  .three-d {
    font: 700 14px/16px 'Open Sans', sans-serif;
  }

  .sunken {
    border: 1px solid;
    border-color: #999 #fff #fff #999;
    background: #f6f6f6;
  }

  .viewbar .sunken {
    display: grid;
    place-items: center;
    width: 21px;
    height: 22px;
    margin: 0 -3px;
  }

  input[type='range'] {
    appearance: none;
    width: 86px;
    height: 22px;
    margin: 0 0 0 4px;
    background: linear-gradient(#777, #777) center / 100% 2px no-repeat;
  }

  input[type='range']::-webkit-slider-thumb {
    appearance: none;
    width: 11px;
    height: 20px;
    background: #f0f0f0;
    border: 1px solid;
    border-color: #fff #666 #666 #fff;
    border-width: 1px 2px 1px 1px;
    border-radius: 0 0 5px 5px;
  }

  .view {
    flex: 1;
    display: grid;
    grid-template: 21px minmax(0, 1fr) 16px / 20px minmax(0, 1fr) 16px;
    min-height: 0;
    border-bottom: 1px solid #fff;
  }

  .corner, .ruler {
    box-sizing: border-box;
    border: 1px solid #999;
    border-width: 1px 1px 1px 0;
  }

  .corner {
    display: grid;
    place-items: center;
  }

  .ruler {
    width: 100%;
    height: 100%;
    font-size: 11px;
    overflow: hidden;
  }

  .side {
    border-top: 0;
    border-bottom: 0;
  }

  .unit {
    font-size: 9px;
  }

  .canvas {
    width: 100%;
    height: 100%;
  }

  .cut, .outline {
    fill: none;
    stroke: #9c0008;
    shape-rendering: crispEdges;
  }

  .outline {
    stroke: #000;
  }

  .cut *, .outline * {
    vector-effect: non-scaling-stroke;
  }

  .sign {
    font: 600 24px 'Open Sans', sans-serif;
    fill: #fff;
    stroke-linejoin: round;
  }

  .halo {
    stroke: #9c0008;
    stroke-width: 4px;
  }

  .gap {
    stroke: #fff;
    stroke-width: 2px;
  }

  .line {
    stroke: #000;
    stroke-width: 1px;
  }

  .raised {
    display: grid;
    place-items: center;
    padding: 0;
    border: 1px solid;
    border-color: #fff #777 #777 #fff;
    background: #f0f0f0;
  }

  .hbar {
    grid-column: 2 / 3;
    display: flex;
    align-items: center;
    background: #ececec;
  }

  .hbar .thumb {
    flex: 1;
    height: 15px;
    background: linear-gradient(#f6f6f6, #e3e3e3 50%, #c6c6c8);
  }

  .palette {
    display: flex;
    align-items: center;
    gap: 5px;
    height: 40px;
    margin-top: 4px;
    padding: 0 5px;
    border-top: 1px solid #999;
  }

  .palette svg {
    margin-right: 3px;
  }

  .swatch {
    width: 30px;
    height: 30px;
    border: 1px solid #000;
    box-shadow: 1px 1px #888;
  }

  /* layers panel */
  .right {
    border-left: 1px solid #999;
  }

  .right .panel {
    padding: 3px 18px 0 8px;
    border-right: 1px solid #999;
  }

  .layer-head {
    padding-right: 5px;
    color: #fff;
    background: #325688;
  }

  .sheet {
    position: relative;
    margin: 2px 3px 1px 1px;
  }

  .sheet select {
    display: block;
    appearance: none;
    width: 100%;
    height: 22px;
    padding: 0 0 3px 1px;
    background: #fff;
    border: 1px solid;
    border-color: #777 #ddd #ddd #777;
    border-radius: 0;
    box-shadow: inset 1px 1px #555;
  }

  .drop {
    position: absolute;
    top: 2px;
    right: 1px;
    bottom: 1px;
    display: grid;
    place-items: center;
    width: 15px;
    border: 1px solid;
    border-color: #fff #777 #777 #fff;
    box-sizing: border-box;
    background: #f0f0f0;
    pointer-events: none;
  }

  .layer-tools {
    display: flex;
    align-items: center;
    justify-content: space-between;
    height: 26px;
    padding-right: 4px;
  }

  .layer {
    display: flex;
    align-items: center;
    gap: 6px;
    height: 26px;
    padding: 0 4px;
  }

  .current {
    background: #d4d4d4;
  }

  .short {
    height: 24px;
  }

  .color {
    display: grid;
    place-items: center;
    width: 16px;
    height: 16px;
    box-shadow: 1px 1px #999;
  }

  .color i {
    width: 13px;
    height: 13px;
    border-radius: 50%;
    background: #000;
  }

  .flags {
    display: flex;
    margin-left: auto;
  }

  .flags .sunken {
    background: #e8e8e8;
  }

  .popped {
    border: 1px solid;
    border-color: #fff #777 #777 #fff;
  }

  .right .move {
    justify-content: flex-end;
    padding: 3px 3px 18px 0;
  }

  .spacer {
    height: 16px;
  }

  .relief-layer {
    padding-left: 8px;
  }

  /* status and taskbar */
  .status {
    display: grid;
    grid-template-columns: 67px 67px 61px 71px 69px;
    justify-content: end;
    gap: 2px;
    padding: 4px 0 1px;
    border-top: 1px solid #fff;
    box-sizing: border-box;
    font-size: 11px;
  }

  .status span {
    padding-left: 1px;
    border: 1px solid;
    border-color: #999 #fff #fff #999;
    line-height: 14px;
  }

  .taskbar {
    display: flex;
    align-items: center;
    box-sizing: border-box;
    border-top: 1px solid #15334f;
    box-shadow: inset 0 1px #8cc0e4;
    background:
      linear-gradient(45deg, transparent 38%, #a9d2f8 48%, #a9d2f8 52%, transparent 62%) right 228px top / 60px 39px no-repeat,
      linear-gradient(90deg, #1f6496 0, #2775a8 70px, #459fd2 110px, #3a95cc 340px, #2a84c6 440px, #2376bc 870px, #1c63b0 1040px, #174f8c 1080px, #16406f 100%);
  }

  .start {
    margin: 0 11px 0 8px;
  }

  .launcher {
    display: grid;
    place-items: center;
    width: 62px;
  }

  .task {
    display: grid;
    place-items: center;
    width: 59px;
    height: 38px;
    margin-left: 3px;
    padding: 0;
    border: 1px solid #16466e;
    border-radius: 3px;
    box-shadow: inset 0 0 0 1px #a8d0ea;
    background: linear-gradient(150deg, #86bbe0, #4593c8 55%, #4a98cc);
  }

  .front {
    background: linear-gradient(150deg, #cfe4f4, #8cbde0 60%, #b0d4ec);
  }

  .tray {
    display: flex;
    align-items: center;
    gap: 8px;
    margin-left: auto;
    height: 100%;
    color: #fff;
    font-size: 11px;
    line-height: 17px;
  }

  .tray > svg:first-child {
    margin-right: 6px;
  }

  .tray time {
    margin: 0 4px 0 8px;
    text-align: center;
  }

  .peek {
    width: 14px;
    height: 38px;
    padding: 0;
    border: 1px solid #6888a8;
    background: linear-gradient(#54789e, #1c3f68);
  }
</style>
